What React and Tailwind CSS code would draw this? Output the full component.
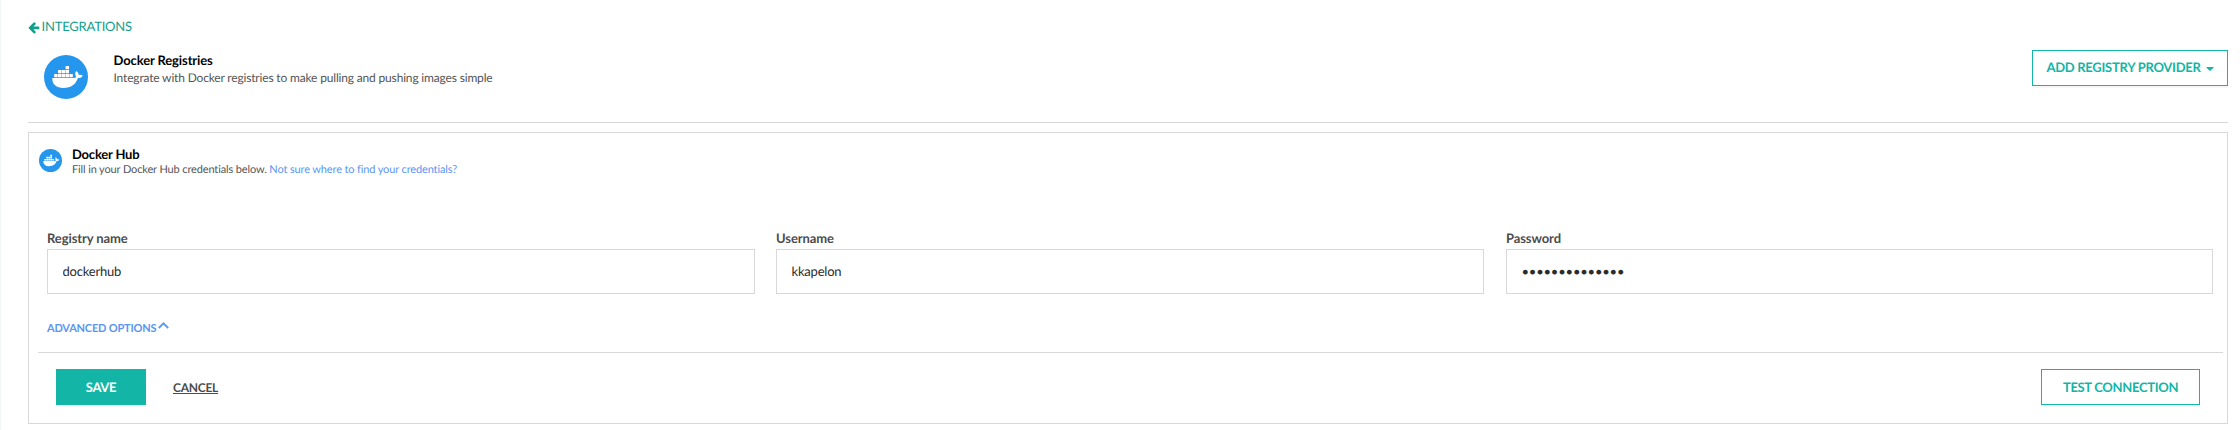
function DockerLogo({ className }) {
  return (
    <svg viewBox="0 0 44 44" className={className} aria-hidden="true">
      <circle cx="22" cy="22" r="22" fill="#2496ed" />
      <g fill="#fff">
        <path d="M21.6 11h3.400v3.200h-3.400zM14 15h3.400v3.200H14zM17.800 15h3.400v3.200h-3.400zM21.600 15h3.400v3.200h-3.400zM10.200 19h3.400v3.200h-3.400zM14 19h3.400v3.200H14zM17.800 19h3.400v3.200h-3.400zM21.600 19h3.400v3.200h-3.400zM25.400 19h3.400v3.200h-3.400z" />
        <path d="M8.300 23h21.300c1.300 0 2.200-.3 2.700-.9-1.300-1.700-1.500-4.200-.2-6.100 1.700 1 2.600 2.300 2.700 3.900 1.500-.3 3-.1 4 .6-.7 1.700-2.300 2.600-4.900 2.600C31.700 29.500 27.300 33 19.500 33 12.300 33 8 29.300 8.300 23z" />
      </g>
    </svg>
  );
}

function Field({ label, type = "text", value, className }) {
  return (
    <label className={`flex flex-col ${className}`}>
      <span className="h-[21px] text-[13px] leading-[20px] font-bold tracking-[-0.1px] text-[#4b4b4b]">{label}</span>
      <input
        type={type}
        defaultValue={value}
        className="h-[45px] w-full border border-[#d8d8d8] bg-white px-[14.5px] pb-[2px] text-[13px] tracking-[-0.2px] text-[#2b2b2b] outline-none [text-rendering:geometricPrecision]"
      />
    </label>
  );
}

export default function App() {
  return (
    <div className="flex h-[430px] w-full flex-col border-l border-[#f0f8f7] bg-white pt-[17px] pr-[12px] pl-[27px] font-['Lato',sans-serif] text-[13px] [text-rendering:geometricPrecision]">
      <a className="flex h-[20px] items-center gap-[1.5px] text-[#0f9f8c]">
        <svg viewBox="0 0 1600 1792" className="h-[13px] w-[12px]" fill="currentColor" aria-hidden="true">
          <path d="M1536 896v128q0 53-32.5 90.5T1419 1152H715l293 294q38 36 38 90t-38 90l-75 76q-37 37-90 37-52 0-91-37L101 1050q-37-37-37-90 0-52 37-91l651-650q38-38 91-38 52 0 90 38l75 74q38 38 38 91t-38 91L715 768h704q52 0 84.500 37.500T1536 896z" />
        </svg>
        <span className="tracking-[-0.2px]">INTEGRATIONS</span>
      </a>

      <header className="mt-[13px] flex h-[73px] shrink-0 items-start border-b border-[#d8d8d8] pl-[16px]">
        <DockerLogo className="mt-[5px] size-[44px]" />
        <div className="ml-[25.5px] flex flex-col pt-[1px]">
          <h1 className="h-[18px] text-[13px] leading-[18px] font-bold tracking-[-0.12px] text-black">Docker Registries</h1>
          <p className="text-[12px] leading-[17px] tracking-[-0.17px] text-[#555]">
            Integrate with Docker registries to make pulling and pushing images simple
          </p>
        </div>
        <button className="ml-auto flex h-[36px] w-[196px] items-center justify-center gap-[5px] border border-[#12b5a6] text-[13px] font-bold tracking-[-0.27px] text-[#12b5a6] shadow-[0_2px_0_#f7f7f7] [text-rendering:geometricPrecision]">
          ADD REGISTRY PROVIDER
          <svg viewBox="0 0 8 4" className="mt-[2px] h-[4px] w-[8px]" fill="currentColor" aria-hidden="true">
            <path d="M.8 0h6.400q.8.200.3.800L4.600 3.400q-.6.500-1.200 0L.5.800Q0 .200.800 0z" />
          </svg>
        </button>
      </header>

      <section className="mt-[9px] flex h-[292px] shrink-0 flex-col border border-[#d8d8d8]">
        <div className="flex h-[92px] items-start pt-[16px] pl-[10px]">
          <DockerLogo className="size-[23px]" />
          <div className="ml-[10px] flex flex-col">
            <h2 className="-mt-[4px] h-[17px] text-[13px] leading-[18px] font-bold tracking-[-0.2px] text-black">Docker Hub</h2>
            <p className="text-[11px] leading-[15px] tracking-[-0.135px] text-[#555]">
              Fill in your Docker Hub credentials below.{" "}
              <a className="text-[#5a96f5]">Not sure where to find your credentials?</a>
            </p>
          </div>
        </div>

        <div className="mt-[3px] flex gap-[21px] pr-[14px] pl-[18px]">
          <Field label="Registry name" value="dockerhub" className="w-[708px]" />
          <Field label="Username" value="kkapelon" className="w-[708px]" />
          <Field label="Password" type="password" value="abcdefghijklmn" className="ml-[1px] w-[707px]" />
        </div>

        <div className="mr-[4px] ml-[9px] flex h-[59px] items-start border-b border-[#d8d8d8] pt-[26px] pl-[9px]">
          <a className="flex items-center gap-[2px] text-[11px] leading-[18px] font-bold tracking-[-0.2px] text-[#5a96f5]">
            ADVANCED OPTIONS
            <svg viewBox="0 0 11 7" className="-mt-[8px] h-[7px] w-[11px]" fill="none" stroke="currentColor" strokeWidth="1.8" aria-hidden="true">
              <path d="M.8 6 5.500 1.300 10.200 6" />
            </svg>
          </a>
        </div>

        <div className="flex items-center pt-[16px] pr-[27px] pl-[27px]">
          <button className="h-[36px] w-[90px] bg-[#12b5a6] pt-[1px] text-[13px] font-bold tracking-[-0.3px] text-white shadow-[0_2px_0_#f7f7f7] [text-rendering:geometricPrecision]">SAVE</button>
          <a className="mt-[1px] ml-[27px] text-[12px] font-bold tracking-[-0.25px] text-[#4b4b4b] underline">CANCEL</a>
          <button className="ml-auto h-[36px] w-[159px] border border-[#12b5a6] pt-[1px] text-[13px] font-bold tracking-[-0.32px] text-[#12b5a6] shadow-[0_2px_0_#f7f7f7] [text-rendering:geometricPrecision]">
            TEST CONNECTION
          </button>
        </div>
      </section>
    </div>
  );
}
